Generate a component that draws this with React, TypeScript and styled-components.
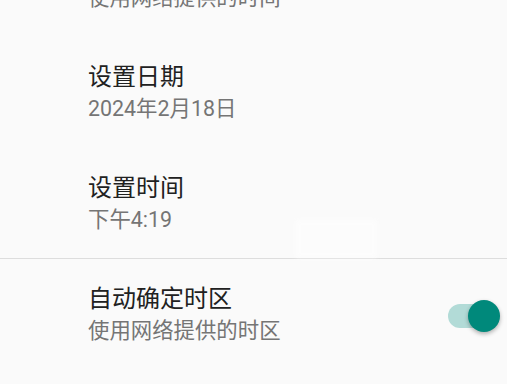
import React from 'react';
import styled, { createGlobalStyle } from 'styled-components';

const GlobalStyle = createGlobalStyle`
  html, body {
    margin: 0;
    padding: 0;
    background: #fafafa;
    overflow: hidden;
  }
  * {
    box-sizing: border-box;
  }
`;

const Screen = styled.div`
  position: relative;
  width: 507px;
  height: 384px;
  overflow: hidden;
  background: #fafafa;
  font-family: Roboto, 'Noto Sans CJK SC', sans-serif;
`;

const List = styled.div`
  display: flex;
  flex-direction: column;
  margin-top: -75px;
`;

const Row = styled.div<{ $divider?: boolean }>`
  display: flex;
  align-items: center;
  justify-content: space-between;
  height: 111px;
  padding: 0 11px 0 88px;
  border-top: ${(p) => (p.$divider ? '1px solid #dddddd' : 'none')};
`;

const Texts = styled.div`
  display: flex;
  flex-direction: column;
  gap: 4px;
`;

const Title = styled.div`
  font-size: 24px;
  line-height: 30px;
  color: #212121;
`;

const Summary = styled.div`
  font-size: 21.4px;
  line-height: 26px;
  color: #757575;
`;

const Track = styled.div`
  position: relative;
  width: 48px;
  height: 24px;
  margin-top: 3px;
  border-radius: 12px;
  background: #b2dbd7;
`;

const Thumb = styled.div`
  position: absolute;
  top: -4px;
  right: -4px;
  width: 32px;
  height: 32px;
  border-radius: 50%;
  background: #00897b;
  box-shadow: 0 2px 4px rgba(0, 0, 0, 0.3);
`;

const Ghost = styled.div`
  position: absolute;
  left: 296px;
  top: 220px;
  width: 81px;
  height: 38px;
  background: #ffffff;
  opacity: 0.55;
  filter: blur(2px);
`;

interface IItem {
  title: string;
  summary: string;
  divider?: boolean;
  toggle?: boolean;
}

const items: IItem[] = [
  { title: '自动确定日期和时间', summary: '使用网络提供的时间' },
  { title: '设置日期', summary: '2024年2月18日' },
  { title: '设置时间', summary: '下午4:19' },
  { title: '自动确定时区', summary: '使用网络提供的时区', divider: true, toggle: true },
];

function App(): JSX.Element {
  return (
    <>
      <GlobalStyle />
      <Screen>
        <List>
          {items.map((item) => (
            <Row key={item.title} $divider={item.divider}>
              <Texts>
                <Title>{item.title}</Title>
                <Summary>{item.summary}</Summary>
              </Texts>
              {item.toggle && (
                <Track>
                  <Thumb />
                </Track>
              )}
            </Row>
          ))}
        </List>
        <Ghost />
      </Screen>
    </>
  );
}

export default App;
